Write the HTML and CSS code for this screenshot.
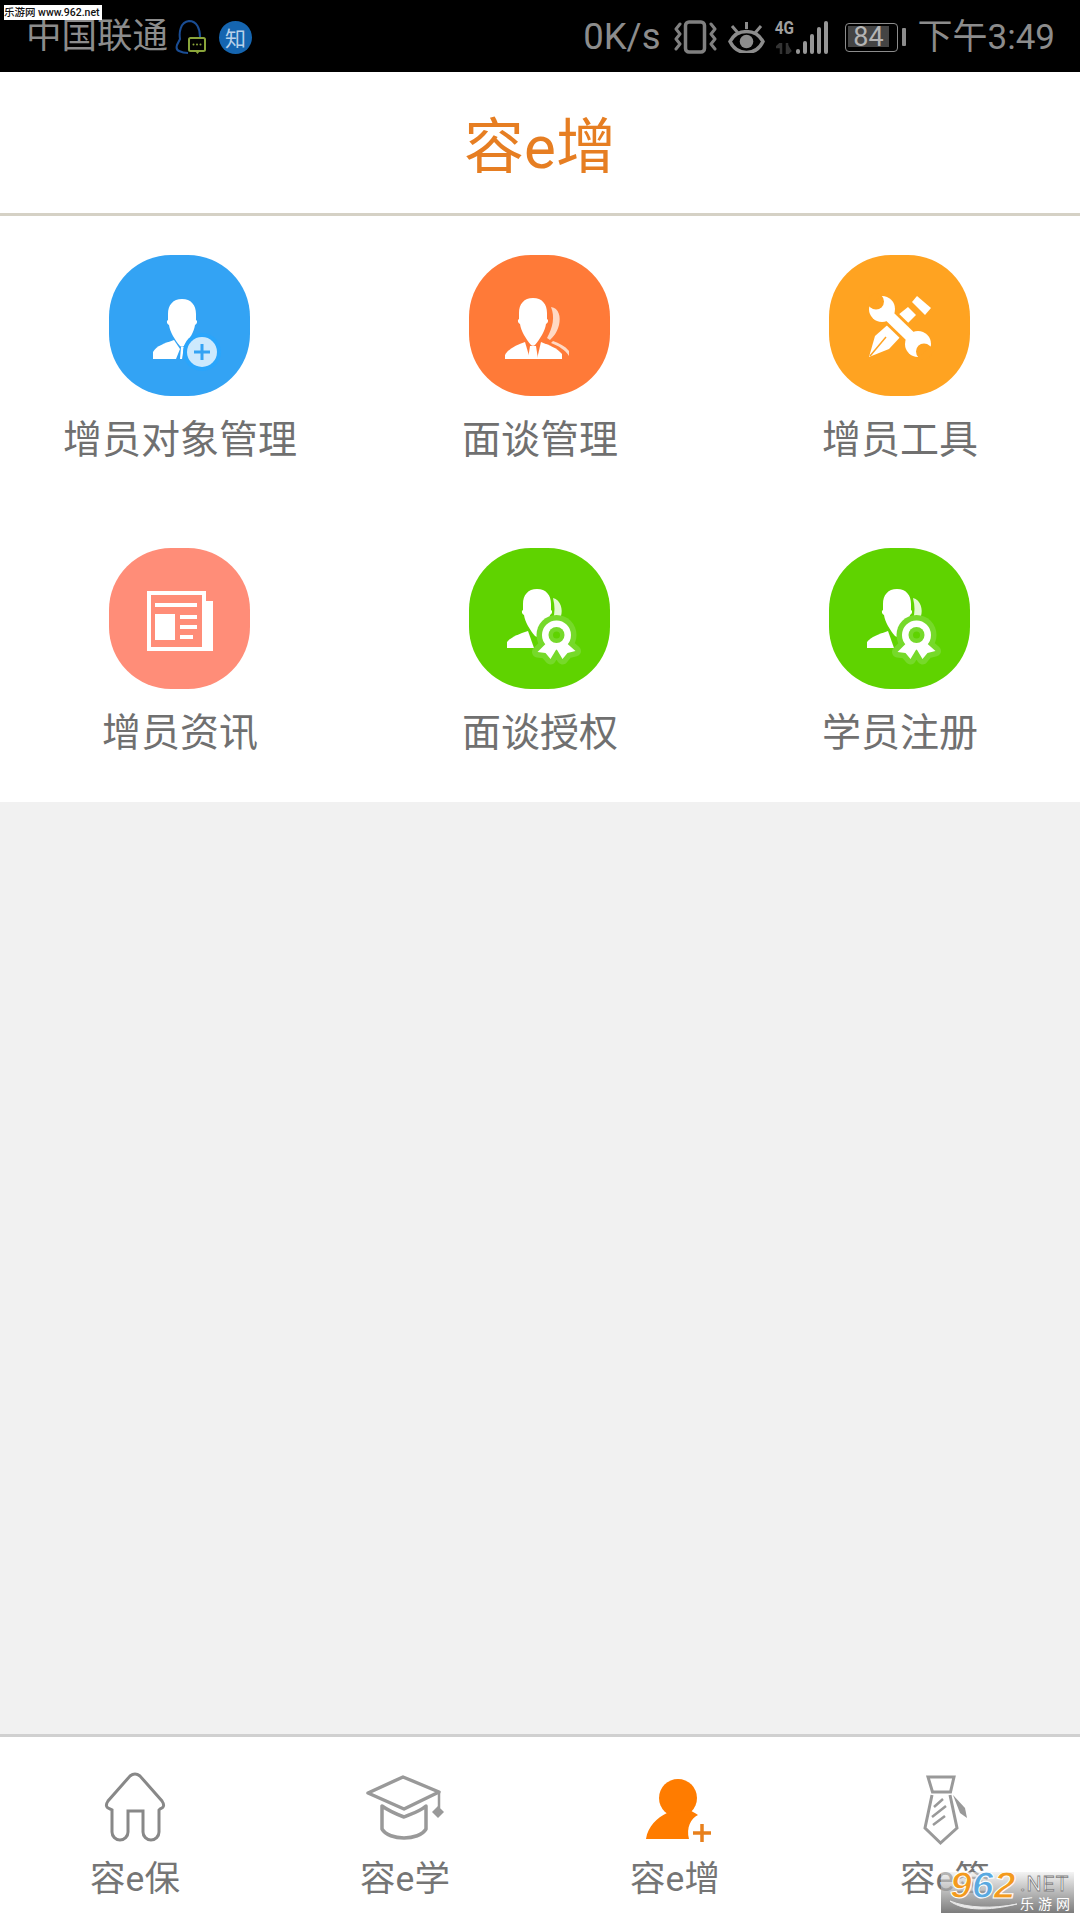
FILE: index.html
```html
<!DOCTYPE html>
<html lang="zh-CN">
<head>
    <meta charset="UTF-8">
    <meta name="viewport" content="width=device-width, initial-scale=1.0">
    <title>容e增</title>
    <link rel="stylesheet" href="styles.css">
</head>
<body>
    <svg class="defs" width="0" height="0">
        <defs>
            <g id="bust-head">
                <path d="M0 0C-9 0-14 6-14 15L-14 21C-16 22-15 25-13 26C-12 33-7 41-2 47C-1 48 1 48 2 47C7 41 12 33 13 26C15 25 16 22 14 21L14 15C14 6 9 0 0 0Z"/>
            </g>
            <g id="rosette">
                <path d="M-10 8L-19 17L-11 18L-6 24L0 14L6 24L11 18L19 16L10 8Z" fill="#76d92a" stroke="#76d92a" stroke-width="11" stroke-linejoin="round"/>
                <circle cx="0" cy="0" r="20" fill="#76d92a"/>
                <path d="M-10 8L-19 17L-11 18L-6 24L0 14L6 24L11 18L19 16L10 8Z" fill="#fff"/>
                <circle cx="0" cy="0" r="14.500" fill="#fff"/>
                <circle cx="0" cy="0" r="8" fill="#76d92a"/>
                <circle cx="0" cy="0" r="3.500" fill="#5fd300"/>
            </g>
        </defs>
    </svg>

    <div class="status-bar">
        <div class="status-left">
            <span class="carrier">中国联通</span>
            <svg class="qq-icon" width="31" height="36" viewBox="0 0 31 36">
                <path d="M13 34C9 34 6 33 4 32C2 31 1 29 2 26L5 20C4 14 5 3 14 2C22 2 25 10 25 18" fill="none" stroke="#1a4d94" stroke-width="2"/>
                <rect x="14" y="19" width="16" height="13" rx="1.500" fill="#000" stroke="#8aa53a" stroke-width="2"/>
                <path d="M20 32H25L22.500 35Z" fill="#8aa53a"/>
                <circle cx="18.500" cy="25.500" r="1" fill="#8aa53a"/>
                <circle cx="22" cy="25.500" r="1" fill="#8aa53a"/>
                <circle cx="25.500" cy="25.500" r="1" fill="#8aa53a"/>
            </svg>
            <span class="zhi-badge">知</span>
        </div>
        <div class="status-right">
            <span class="net-speed">0K/s</span>
            <svg class="vibrate-icon" width="43" height="34" viewBox="0 0 43 34">
                <rect x="11.500" y="2" width="19" height="30" rx="3.500" fill="none" stroke="#808080" stroke-width="3.500"/>
                <path d="M6 4L2 9L6 14L2 19L6 24L2 29" fill="none" stroke="#808080" stroke-width="3" stroke-linejoin="round" stroke-linecap="round"/>
                <path d="M37 4L41 9L37 14L41 19L37 24L41 29" fill="none" stroke="#808080" stroke-width="3" stroke-linejoin="round" stroke-linecap="round"/>
            </svg>
            <svg class="eye-icon" width="37" height="32" viewBox="0 0 37 32">
                <path d="M2 20.500C9 7 28 7 35 20.500C28 35 9 35 2 20.500Z" fill="none" stroke="#8c8c8c" stroke-width="3.500"/>
                <circle cx="18.500" cy="20.500" r="6.800" fill="#8c8c8c"/>
                <path d="M18.500 1V8M4 5L10 12M33 5L27 12" fill="none" stroke="#8c8c8c" stroke-width="3"/>
            </svg>
            <div class="signal">
                <div class="signal-type">
                    <span class="signal-4g">4G</span>
                    <svg width="18" height="11" viewBox="0 0 18 11">
                        <path d="M5 0V11M1 4L5 0L5 4ZM11 0V11L15 7" fill="#333" stroke="#333" stroke-width="2.500"/>
                    </svg>
                </div>
                <div class="signal-bars">
                    <i class="bar bar-1"></i>
                    <i class="bar bar-2"></i>
                    <i class="bar bar-3"></i>
                    <i class="bar bar-4"></i>
                    <i class="bar bar-5"></i>
                </div>
            </div>
            <div class="battery">
                <div class="battery-body">
                    <span class="battery-level">84</span>
                </div>
                <i class="battery-nub"></i>
            </div>
            <span class="clock">下午3:49</span>
        </div>
    </div>

    <header class="title-bar">容e增</header>

    <section class="grid">
        <div class="tile">
            <div class="tile-icon blue">
                <svg width="141" height="141" viewBox="0 0 141 141">
                    <use href="#bust-head" fill="#fff" x="73" y="44"/>
                    <path d="M44 104V97C47 91 56 88 65 85L71 94L67 104Z" fill="#fff"/>
                    <path d="M72 92L75 92L73 104H71Z" fill="#fff"/>
                    <circle cx="93" cy="97" r="19" fill="#2aa5fb"/>
                    <circle cx="93" cy="97" r="15" fill="#cde9fd"/>
                    <path d="M93 89V105M85 97H101" fill="none" stroke="#33a3f4" stroke-width="3"/>
                </svg>
            </div>
            <span class="tile-label">增员对象管理</span>
        </div>
        <div class="tile">
            <div class="tile-icon orange">
                <svg width="141" height="141" viewBox="0 0 141 141">
                    <path d="M82 52C90 53 92 62 90 70C88 78 84 82 81 85L78 83C84 72 86 62 82 52Z" fill="#ffd9c4"/>
                    <path d="M84 86C90 88 96 91 100 96V101C96 95 90 91 82 88Z" fill="#ffd9c4"/>
                    <use href="#bust-head" fill="#fff" x="64" y="43"/>
                    <path d="M36 104V100C40 93 48 90 56 87L61 104Z" fill="#fff"/>
                    <path d="M72 87C80 90 88 93 93 99V104H68Z" fill="#fff"/>
                    <path d="M61 91H67L69 104H59Z" fill="#fff"/>
                </svg>
            </div>
            <span class="tile-label">面谈管理</span>
        </div>
        <div class="tile">
            <div class="tile-icon amber">
                <svg width="141" height="141" viewBox="0 0 141 141">
                    <path d="M40 102L46 81L63 66L75 78L60 94Z" fill="#fff"/>
                    <path d="M41 101L57 82" fill="none" stroke="#ffa321" stroke-width="1.500"/>
                    <path d="M69 60L79 52L87 60L78 69Z" fill="#fff"/>
                    <path d="M83 47L88 41L102 53L96 60Z" fill="#fff"/>
                    <path d="M55 56L87 87" fill="none" stroke="#ffa321" stroke-width="17"/>
                    <path d="M55 56L87 87" fill="none" stroke="#fff" stroke-width="11"/>
                    <circle cx="53" cy="54" r="13" fill="#fff"/>
                    <circle cx="89" cy="89" r="13" fill="#fff"/>
                    <circle cx="47" cy="46.500" r="8" fill="#ffa321"/>
                    <circle cx="95" cy="96.500" r="8" fill="#ffa321"/>
                    <path d="M36 48L46 38L50 42L41 52Z" fill="#ffa321"/>
                    <path d="M106 95L96 105L92 101L101 91Z" fill="#ffa321"/>
                </svg>
            </div>
            <span class="tile-label">增员工具</span>
        </div>
        <div class="tile">
            <div class="tile-icon salmon">
                <svg width="141" height="141" viewBox="0 0 141 141">
                    <path d="M38 43H97V53H104V103H38Z" fill="#fff"/>
                    <path d="M42 47H93V99H42Z" fill="#ff8d78"/>
                    <rect x="46" y="55" width="42" height="4" fill="#fff"/>
                    <rect x="46" y="66" width="20" height="26" fill="#fff"/>
                    <rect x="71" y="67" width="17" height="4" fill="#fff"/>
                    <rect x="71" y="77" width="17" height="4" fill="#fff"/>
                    <rect x="71" y="87" width="13" height="4" fill="#fff"/>
                </svg>
            </div>
            <span class="tile-label">增员资讯</span>
        </div>
        <div class="tile">
            <div class="tile-icon green">
                <svg width="141" height="141" viewBox="0 0 141 141">
                    <path d="M84 50C92 52 94 62 92 68L84 72C86 64 86 58 84 50Z" fill="#e4f9d3"/>
                    <use href="#bust-head" fill="#fff" x="68" y="41"/>
                    <path d="M38 100V94C42 89 50 86 59 83L65 100Z" fill="#fff"/>
                    <use href="#rosette" x="87.500" y="87"/>
                </svg>
            </div>
            <span class="tile-label">面谈授权</span>
        </div>
        <div class="tile">
            <div class="tile-icon green">
                <svg width="141" height="141" viewBox="0 0 141 141">
                    <path d="M84 50C92 52 94 62 92 68L84 72C86 64 86 58 84 50Z" fill="#e4f9d3"/>
                    <use href="#bust-head" fill="#fff" x="68" y="41"/>
                    <path d="M38 100V94C42 89 50 86 59 83L65 100Z" fill="#fff"/>
                    <use href="#rosette" x="87.500" y="87"/>
                </svg>
            </div>
            <span class="tile-label">学员注册</span>
        </div>
    </section>

    <main class="empty-area"></main>

    <nav class="tab-bar">
        <div class="tab">
            <svg width="80" height="80" viewBox="0 0 80 80">
                <path d="M35 8Q40 4 45 8L67 33Q71 39 65 41L64 42V64A8 8 0 0 1 48 64V43H33V64A8 8 0 0 1 17 64V42L15 41Q9 39 13 33Z" fill="none" stroke="#888" stroke-width="3"/>
            </svg>
            <span class="tab-label">容e保</span>
        </div>
        <div class="tab">
            <svg width="80" height="80" viewBox="0 0 80 80">
                <path d="M38 9L74 24L39 41L3 25Z" fill="none" stroke="#999" stroke-width="3.500" stroke-linejoin="round"/>
                <path d="M17 38V61C24 73 54 73 61 61V38C54 44 46 46 39 49C31 46 24 43 17 38Z" fill="none" stroke="#999" stroke-width="3.500" stroke-linejoin="round"/>
                <path d="M74 25V40" fill="none" stroke="#999" stroke-width="2.500"/>
                <path d="M73 38L79 44L73 50L67 44Z" fill="#999"/>
            </svg>
            <span class="tab-label">容e学</span>
        </div>
        <div class="tab">
            <svg width="80" height="80" viewBox="0 0 80 80">
                <circle cx="43" cy="30" r="19" fill="#ff7c00"/>
                <path d="M11 71C13 58 22 50 32 45L54 42C57 43 60 45 63 47C56 50 51 60 54 71Z" fill="#ff7c00"/>
                <path d="M67 56V74M58 65H76" fill="none" stroke="#e8801c" stroke-width="3.500"/>
            </svg>
            <span class="tab-label">容e增</span>
        </div>
        <div class="tab">
            <svg width="80" height="80" viewBox="0 0 80 80">
                <path d="M23 9H49L45.500 24H27.500Z" fill="none" stroke="#999" stroke-width="3"/>
                <path d="M27 27L20 60L35.500 75L52 60L45 27" fill="none" stroke="#999" stroke-width="3"/>
                <path d="M29 39L38 31M27 49L41 38M28 57L40 48" fill="none" stroke="#999" stroke-width="2.500"/>
                <path d="M48 27L60 40L62 50L55 45Z" fill="#999"/>
            </svg>
            <span class="tab-label">容e签</span>
        </div>
    </nav>

    <div class="mark-top">乐游网 www.962.net</div>
    <div class="mark-bottom">
        <svg class="mark-swoosh" width="70" height="12" viewBox="0 0 70 12">
            <path d="M1 1C14 11 40 11 68 4C44 9 18 8 1 1Z" fill="#e8e8e8" stroke="#e8e8e8"/>
        </svg>
        <div class="mark-digits"><b class="mark-orange">9</b><b class="mark-blue">6</b><b class="mark-orange">2</b></div>
        <div class="mark-side">
            <span class="mark-net">.NET</span>
            <span class="mark-cn">乐游网</span>
        </div>
    </div>
</body>
</html>
```

FILE: styles.css
```css
* {
    box-sizing: border-box;
}
body {
    margin: 0;
    width: 1080px;
    height: 1920px;
    position: relative;
    display: flex;
    flex-direction: column;
    background-color: #ffffff;
    font-family: Roboto, "Noto Sans CJK SC", sans-serif;
    overflow: hidden;
}
.defs {
    position: absolute;
}

/* status bar */
.status-bar {
    height: 72px;
    flex-shrink: 0;
    background-color: #000000;
    color: #8c8c8c;
    display: flex;
    justify-content: space-between;
    align-items: center;
    padding: 2px 25px 0 26px;
    font-size: 35px;
}
.status-left, .status-right {
    display: flex;
    align-items: center;
}
.carrier {
    font-size: 35.500px;
    line-height: 1;
}
.qq-icon {
    margin-left: 7px;
}
.zhi-badge {
    width: 33px;
    height: 33px;
    margin-left: 13px;
    border-radius: 50%;
    background-color: #1565b0;
    color: #b9d2ea;
    font-size: 21px;
    display: flex;
    align-items: center;
    justify-content: center;
}
.net-speed {
    font-size: 36.500px;
    line-height: 1;
}
.clock {
    line-height: 1;
    margin-left: 12px;
}
.vibrate-icon {
    margin-left: 13px;
}
.eye-icon {
    margin-left: 11px;
}
.signal {
    margin-left: 11px;
    display: flex;
    align-items: flex-end;
    gap: 2px;
}
.signal-type {
    width: 18px;
    display: flex;
    flex-direction: column;
    align-items: center;
    gap: 8px;
    color: #a0a0a0;
}
.signal-4g {
    font-size: 18px;
    font-weight: 700;
    line-height: 14px;
    transform: scaleX(0.85);
}
.signal-bars {
    display: flex;
    align-items: flex-end;
    gap: 3px;
    height: 34px;
}
.bar {
    display: block;
    width: 4px;
    background-color: #969696;
    border-radius: 2px;
}
.bar-1 { height: 5px; }
.bar-2 { height: 13px; }
.bar-3 { height: 20px; }
.bar-4 { height: 27px; }
.bar-5 { height: 33px; }
.battery {
    margin-left: 17px;
    display: flex;
    align-items: center;
    gap: 4px;
}
.battery-body {
    width: 53px;
    height: 29px;
    border: 1.500px solid #8c8c8c;
    border-radius: 4px;
    padding: 2.500px;
}
.battery-level {
    display: block;
    width: 41px;
    height: 21px;
    background-color: #444444;
    color: #b4b4b4;
    font-size: 27px;
    line-height: 22px;
    text-align: center;
}
.battery-nub {
    display: block;
    width: 4px;
    height: 18px;
    background-color: #8c8c8c;
    border-radius: 1px;
}

/* title */
.title-bar {
    height: 144px;
    flex-shrink: 0;
    border-bottom: 3px solid #d5d1c5;
    padding-bottom: 2px;
    color: #e67e22;
    font-size: 60px;
    display: flex;
    align-items: center;
    justify-content: center;
}

/* icon grid */
.grid {
    flex-shrink: 0;
    height: 586px;
    padding-top: 39px;
    display: grid;
    grid-template-columns: repeat(3, 1fr);
    grid-template-rows: 293px 293px;
    align-content: start;
    background-color: #ffffff;
}
.tile {
    display: flex;
    flex-direction: column;
    align-items: center;
}
.tile-icon {
    width: 141px;
    height: 141px;
    margin-right: 2px;
    border-radius: 44%;
}
.tile-icon svg {
    display: block;
}
.blue { background-color: #33a3f4; }
.orange { background-color: #ff7a38; }
.amber { background-color: #ffa321; }
.salmon { background-color: #ff8d78; }
.green { background-color: #5fd300; }
.tile-label {
    margin-top: 17px;
    color: #707070;
    font-size: 39px;
    line-height: 54px;
}

.empty-area {
    flex-grow: 1;
    background-color: #f1f1f1;
}

/* bottom tabs */
.tab-bar {
    height: 186px;
    flex-shrink: 0;
    border-top: 3px solid #d0d0d0;
    display: grid;
    grid-template-columns: repeat(4, 1fr);
    padding-top: 31px;
    background-color: #ffffff;
}
.tab {
    display: flex;
    flex-direction: column;
    align-items: center;
}
.tab svg {
    display: block;
}
.tab-label {
    margin-top: 7px;
    color: #757575;
    font-size: 35.500px;
    line-height: 48px;
}

/* watermarks over the screenshot */
.mark-top {
    position: absolute;
    left: 4px;
    top: 5px;
    width: 98px;
    height: 15px;
    background-color: #ffffff;
    color: #111111;
    font-size: 10.500px;
    font-weight: 500;
    line-height: 15px;
    white-space: nowrap;
}
.mark-bottom {
    position: absolute;
    right: 6px;
    bottom: 7px;
    width: 133px;
    height: 41px;
    background: linear-gradient(to bottom, rgba(235, 235, 235, 0.55), #7c7c7c);
    padding-left: 9px;
    display: flex;
    gap: 2px;
}
.mark-swoosh {
    position: absolute;
    left: 8px;
    bottom: 1px;
}
.mark-digits {
    width: 68px;
    margin-top: -3px;
    height: 32px;
    font-family: "Liberation Sans", sans-serif;
    font-size: 37px;
    font-style: italic;
    line-height: 33px;
    -webkit-text-stroke: 1px #ffffff;
    position: relative;
    transform: scaleX(1.06);
    transform-origin: left center;
}
.mark-orange { color: #f39a1e; }
.mark-blue { color: #5aa9e0; }
.mark-side {
    display: flex;
    flex-direction: column;
    align-items: flex-start;
}
.mark-net {
    height: 22px;
    font-size: 21px;
    line-height: 24px;
    letter-spacing: 1px;
    color: #ffffff;
    -webkit-text-stroke: 0.800px #808080;
}
.mark-cn {
    margin-top: 3px;
    color: #ffffff;
    font-size: 14px;
    letter-spacing: 4px;
    line-height: 14px;
}
```
